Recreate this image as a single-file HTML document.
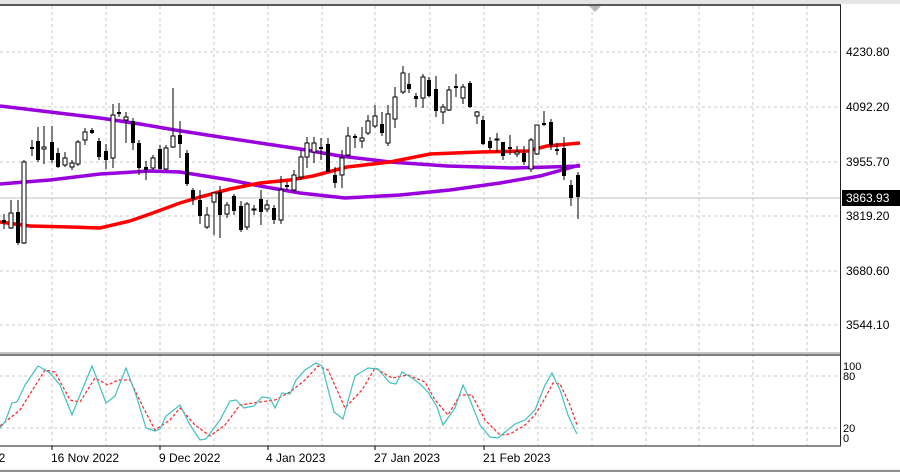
<!DOCTYPE html>
<html><head><meta charset="utf-8"><style>
html,body{margin:0;padding:0;background:#fff;width:900px;height:472px;overflow:hidden}
svg{display:block}
text{font-family:"Liberation Sans",sans-serif;font-size:12px;fill:#000}
</style></head><body>
<svg width="900" height="472" viewBox="0 0 900 472" xmlns="http://www.w3.org/2000/svg">
<rect x="0" y="0" width="900" height="4" fill="#e4e4e4"/>
<line x1="0" y1="5" x2="841" y2="5" stroke="#222" stroke-width="1.5"/>
<polygon points="589,6 601,6 595,12" fill="#b8b8b8"/>
<g stroke="#c8c8c8" stroke-dasharray="3,3" stroke-width="1">
<line x1="52" y1="6" x2="52" y2="446"/><line x1="106" y1="6" x2="106" y2="446"/><line x1="160" y1="6" x2="160" y2="446"/><line x1="214" y1="6" x2="214" y2="446"/><line x1="268" y1="6" x2="268" y2="446"/><line x1="322" y1="6" x2="322" y2="446"/><line x1="375" y1="6" x2="375" y2="446"/><line x1="430" y1="6" x2="430" y2="446"/><line x1="484" y1="6" x2="484" y2="446"/><line x1="538" y1="6" x2="538" y2="446"/><line x1="592" y1="6" x2="592" y2="446"/><line x1="646" y1="6" x2="646" y2="446"/><line x1="699" y1="6" x2="699" y2="446"/><line x1="753" y1="6" x2="753" y2="446"/><line x1="807" y1="6" x2="807" y2="446"/>
<line x1="0" y1="52" x2="840" y2="52"/><line x1="0" y1="107" x2="840" y2="107"/><line x1="0" y1="162" x2="840" y2="162"/><line x1="0" y1="216" x2="840" y2="216"/><line x1="0" y1="271" x2="840" y2="271"/><line x1="0" y1="325" x2="840" y2="325"/>
<line x1="0" y1="376" x2="840" y2="376"/><line x1="0" y1="428" x2="840" y2="428"/>
</g>
<line x1="0" y1="198" x2="840" y2="198" stroke="#c0c0c0"/>
<!-- MAs -->
<polyline fill="none" stroke="#9900dd" stroke-width="3.5" points="0,106 50,112 100,118 140,124 175,130 220,137 260,143 300,149 340,156 390,162 447,166 513,168 550,167 580,166"/>
<polyline fill="none" stroke="#9900dd" stroke-width="3.5" points="0,184 50,180 100,174 150,171 180,172 230,180 260,186 300,193 345,198 400,195 450,190 500,183 540,176 580,165"/>
<polyline fill="none" stroke="#ff0000" stroke-width="3.5" points="0,222 30,226 70,227 100,228 130,221 150,214 180,203 200,197 230,189 260,183 290,180 313,176 347,167 390,162 430,154 480,152 528,151 547,146 580,143"/>
<!-- candles -->
<g stroke="#000" stroke-width="1">
<path d="M4 214V229M11 200V229M18 200V245M24 160V244M32 140V156M38 127V162M44 126V164M52 126V163M58 148V168M65 152V167M72 160V170M78 140V166M85 128V145M92 128V134M99 138V160M106 144V169M113 104V168M119 103V117M126 112V143M133 118V150M139 140V175M146 161V180M153 155V170M160 145V170M166 145V170M173 88V148M180 121V158M187 150V186M193 188V205M200 190V224M207 207V229M214 193V235M220 186V238M227 202V218M234 194V215M241 201V232M247 202V230M254 205V215M261 190V225M267 200V212M274 205V224M281 176V224M287 182V190M294 170V192M301 150V180M307 137V168M314 137V163M321 138V160M328 138V172M335 167V188M342 150V188M348 127V157M355 134V148M362 127V148M368 115V135M375 105V128M382 112V136M388 105V146M395 87V128M403 66V94M409 73V93M416 93V107M423 74V108M429 77V97M436 76V117M443 104V124M449 86V111M456 74V97M463 84V104M470 81V108M477 111V124M483 116V145M490 137V150M497 133V152M503 142V160M510 135V155M517 146V157M524 146V165M531 138V172M537 125V155M544 111V126M551 119V150M557 143V155M564 137V180M571 180V206M578 172V219"/>
</g>
<g fill="#fff" stroke="#000" stroke-width="1">
<rect x="9" y="213" width="4" height="15"/><rect x="22" y="162" width="4" height="81"/><rect x="42" y="147" width="4" height="2"/><rect x="63" y="158" width="4" height="7"/><rect x="70" y="163" width="4" height="4"/><rect x="76" y="142" width="4" height="22"/><rect x="83" y="132" width="4" height="8"/><rect x="111" y="115" width="4" height="43"/><rect x="124" y="117" width="4" height="3"/><rect x="151" y="158" width="4" height="10"/><rect x="164" y="148" width="4" height="21"/><rect x="171" y="136" width="4" height="11"/><rect x="205" y="215" width="4" height="12"/><rect x="212" y="193" width="4" height="9"/><rect x="225" y="205" width="4" height="9"/><rect x="245" y="204" width="4" height="23"/><rect x="252" y="209" width="4" height="1"/><rect x="265" y="205" width="4" height="4"/><rect x="279" y="190" width="4" height="30"/><rect x="292" y="175" width="4" height="15"/><rect x="299" y="157" width="4" height="20"/><rect x="305" y="143" width="4" height="14"/><rect x="312" y="143" width="4" height="9"/><rect x="340" y="158" width="4" height="17"/><rect x="346" y="136" width="4" height="19"/><rect x="360" y="138" width="4" height="3"/><rect x="366" y="121" width="4" height="12"/><rect x="373" y="116" width="4" height="10"/><rect x="386" y="114" width="4" height="29"/><rect x="393" y="97" width="4" height="22"/><rect x="401" y="73" width="4" height="19"/><rect x="421" y="77" width="4" height="21"/><rect x="441" y="107" width="4" height="5"/><rect x="447" y="90" width="4" height="20"/><rect x="461" y="87" width="4" height="11"/><rect x="475" y="112" width="4" height="4"/><rect x="495" y="139" width="4" height="1"/><rect x="515" y="152" width="4" height="2"/><rect x="529" y="140" width="4" height="29"/><rect x="535" y="125" width="4" height="29"/>
</g>
<g fill="#000">
<rect x="2" y="220" width="4" height="3"/><rect x="16" y="212" width="4" height="31"/><rect x="30" y="147" width="4" height="2"/><rect x="36" y="141" width="4" height="19"/><rect x="50" y="142" width="4" height="18"/><rect x="56" y="153" width="4" height="14"/><rect x="90" y="130" width="4" height="3"/><rect x="97" y="141" width="4" height="16"/><rect x="104" y="151" width="4" height="9"/><rect x="117" y="112" width="4" height="2"/><rect x="131" y="121" width="4" height="22"/><rect x="137" y="143" width="4" height="25"/><rect x="144" y="167" width="4" height="3"/><rect x="158" y="149" width="4" height="20"/><rect x="178" y="135" width="4" height="9"/><rect x="185" y="153" width="4" height="31"/><rect x="191" y="190" width="4" height="9"/><rect x="198" y="200" width="4" height="16"/><rect x="218" y="192" width="4" height="23"/><rect x="232" y="196" width="4" height="15"/><rect x="239" y="206" width="4" height="24"/><rect x="259" y="199" width="4" height="13"/><rect x="272" y="208" width="4" height="12"/><rect x="285" y="185" width="4" height="2"/><rect x="319" y="147" width="4" height="2"/><rect x="326" y="144" width="4" height="28"/><rect x="333" y="175" width="4" height="8"/><rect x="353" y="136" width="4" height="2"/><rect x="380" y="124" width="4" height="9"/><rect x="407" y="84" width="4" height="5"/><rect x="414" y="96" width="4" height="3"/><rect x="427" y="80" width="4" height="16"/><rect x="434" y="89" width="4" height="22"/><rect x="454" y="86" width="4" height="2"/><rect x="468" y="83" width="4" height="24"/><rect x="481" y="120" width="4" height="24"/><rect x="488" y="141" width="4" height="7"/><rect x="501" y="142" width="4" height="14"/><rect x="508" y="147" width="4" height="2"/><rect x="522" y="153" width="4" height="9"/><rect x="542" y="123" width="4" height="2"/><rect x="549" y="122" width="4" height="23"/><rect x="555" y="149" width="4" height="2"/><rect x="562" y="148" width="4" height="28"/><rect x="569" y="185" width="4" height="13"/><rect x="576" y="175" width="4" height="22"/>
</g>
<!-- pane borders -->
<line x1="840.5" y1="5" x2="840.5" y2="446" stroke="#222"/>
<line x1="0" y1="353" x2="840" y2="353" stroke="#888" stroke-width="1"/>
<line x1="0" y1="355" x2="840" y2="355" stroke="#555" stroke-width="1.5"/>
<line x1="0" y1="446" x2="841" y2="446" stroke="#666" stroke-width="1.5"/>
<!-- stochastic -->
<polyline fill="none" stroke="#ff2020" stroke-width="1.2" stroke-dasharray="3,2" points="0,426 20,410 45,370 55,372 70,400 80,402 95,378 108,385 118,380 130,380 142,405 155,430 170,420 180,408 195,425 210,436 225,425 240,405 260,402 275,400 290,392 305,380 318,366 328,370 345,408 362,390 375,368 392,378 408,375 425,382 435,400 448,415 460,395 472,395 485,420 500,435 510,434 525,425 535,415 545,398 553,383 560,384 570,405 577,425"/>
<polyline fill="none" stroke="#40c0c0" stroke-width="1.2" points="0,428 5,422 12,403 17,402 25,385 38,366 50,373 60,385 72,415 80,395 92,366 106,403 115,396 126,368 136,395 146,428 155,431 160,429 166,416 180,405 190,425 200,440 206,439 220,420 230,401 236,400 244,408 254,406 262,397 270,398 275,408 282,393 290,394 296,380 305,370 316,363 322,366 334,412 343,419 355,376 368,368 378,369 390,383 396,384 402,372 412,378 420,384 428,392 437,407 443,425 455,408 463,385 470,400 480,425 490,437 498,438 515,424 525,420 535,410 545,385 552,373 560,390 568,415 575,430 577,434"/>
<!-- price labels -->
<g>
<text x="846" y="56">4230.80</text><text x="846" y="111">4092.20</text><text x="846" y="166">3955.70</text><text x="846" y="220">3819.20</text><text x="846" y="275">3680.60</text><text x="846" y="329">3544.10</text>
<rect x="842" y="190" width="58" height="16" fill="#000"/><text x="846" y="202" fill="#fff" style="fill:#fff">3863.93</text>
<text x="843" y="370" style="font-size:11px">100</text><text x="843" y="380" style="font-size:11px">80</text><text x="843" y="432" style="font-size:11px">20</text><text x="843" y="442" style="font-size:11px">0</text>
</g>
<g stroke="#000"><line x1="52" y1="446" x2="52" y2="450"/><line x1="160" y1="446" x2="160" y2="450"/><line x1="268" y1="446" x2="268" y2="450"/><line x1="375" y1="446" x2="375" y2="450"/><line x1="484" y1="446" x2="484" y2="450"/></g>
<text x="-8" y="462">22</text><text x="51" y="462">16 Nov 2022</text><text x="159" y="462">9 Dec 2022</text><text x="266" y="462">4 Jan 2023</text><text x="374" y="462">27 Jan 2023</text><text x="483" y="462">21 Feb 2023</text>
<rect x="0" y="469" width="900" height="3" fill="#ececec"/>
<line x1="0" y1="471" x2="900" y2="471" stroke="#333"/>
</svg>
</body></html>
